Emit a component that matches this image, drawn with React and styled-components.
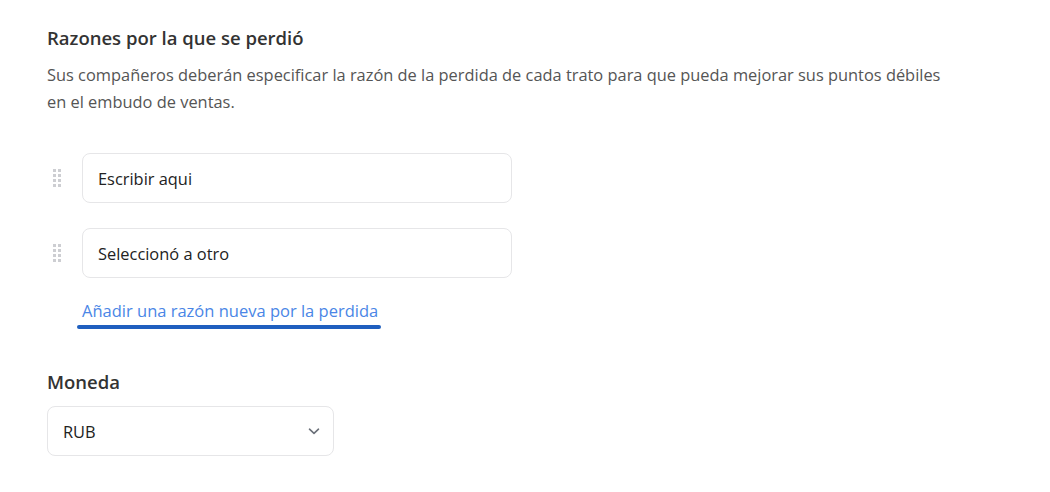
import React from 'react';
import styled, {createGlobalStyle} from 'styled-components';

const GlobalStyle = createGlobalStyle`
  body {
    margin: 0;
    background: #fff;
    font-family: "Open Sans", "Noto Sans", sans-serif;
  }
`;

const Page = styled.div`
  padding: 25px 47px;
  width: 956px;
`;

const Section = styled.section`
  display: flex;
  flex-direction: column;
  margin-bottom: ${props => props.gap || 0}px;
`;

const Title = styled.h2`
  margin: 0;
  font-size: 18.5px;
  line-height: 26px;
  font-weight: 600;
  color: #333;
`;

const Description = styled.p`
  margin: 10px 0 0;
  font-size: 16.4px;
  line-height: 27px;
  color: #555;
  max-width: 905px;
`;

const ReasonList = styled.div`
  display: flex;
  flex-direction: column;
  gap: 25px;
  margin-top: 38px;
`;

const ReasonRow = styled.div`
  display: flex;
  align-items: center;
`;

const Handle = styled.div`
  display: grid;
  grid-template-columns: repeat(2, 3px);
  grid-auto-rows: 3px;
  gap: 2px;
  margin-left: 6px;
  width: 29px;
  span {
    background: #cdced2;
  }
`;

const TextBox = styled.div`
  box-sizing: border-box;
  width: ${props => props.width}px;
  height: 50px;
  display: flex;
  align-items: center;
  justify-content: space-between;
  padding: 0 13px 0 15px;
  border: 1px solid #e6e6e8;
  border-radius: 8px;
  font-size: 16.4px;
  color: #222;
`;

const AddLink = styled.a`
  position: relative;
  align-self: flex-start;
  margin: 23px 0 0 35px;
  font-size: 16.5px;
  line-height: 20px;
  color: #4a86e6;
  text-decoration: none;
  cursor: pointer;

  &::after {
    content: '';
    position: absolute;
    left: -5px;
    right: -3px;
    bottom: -8px;
    height: 4px;
    border-radius: 2px;
    background: #1f5fbf;
  }
`;

const Label = styled.h3`
  margin: 0 0 11px;
  font-size: 18.5px;
  line-height: 26px;
  font-weight: 600;
  color: #333;
`;

const Chevron = () => (
  <svg width="12" height="7" viewBox="0 0 12 7">
    <path d="M1.5 1.2 L6 5.4 L10.5 1.2" fill="none" stroke="#6b7079" strokeWidth="1.6" strokeLinecap="round" strokeLinejoin="round"/>
  </svg>
);

const DragHandle = () => (
  <Handle>
    {Array.from({length: 8}).map((_, i) => <span key={i}/>)}
  </Handle>
);

const reasons = ['Escribir aqui', 'Seleccionó a otro'];

const App = () => (
  <Page>
    <GlobalStyle/>
    <Section gap={48}>
      <Title>Razones por la que se perdió</Title>
      <Description>
        Sus compañeros deberán especificar la razón de la perdida de cada trato para que pueda mejorar sus puntos débiles en el embudo de ventas.
      </Description>
      <ReasonList>
        {reasons.map(r => (
          <ReasonRow key={r}>
            <DragHandle/>
            <TextBox width={430}>{r}</TextBox>
          </ReasonRow>
        ))}
      </ReasonList>
      <AddLink>Añadir una razón nueva por la perdida</AddLink>
    </Section>
    <Section>
      <Label>Moneda</Label>
      <TextBox width={287}>
        RUB
        <Chevron/>
      </TextBox>
    </Section>
  </Page>
);

export default App;
